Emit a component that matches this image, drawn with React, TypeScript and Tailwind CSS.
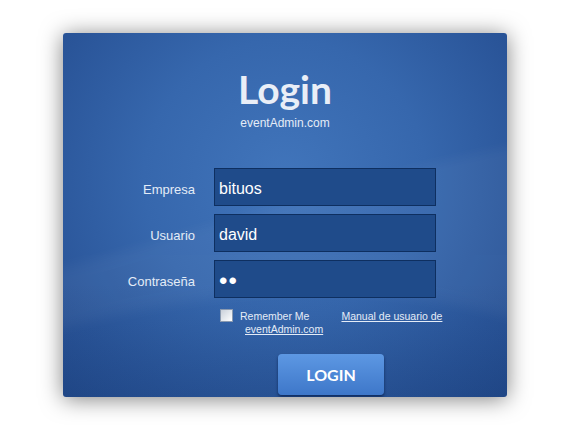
import React from "react";

const labelCls = "flex items-center justify-end pt-[6px] text-[13px] text-[#e4ecf7]";
const inputCls =
  "h-[38px] w-[222px] border border-[#0e2f60] bg-[#1f4b8a] px-[4px] pt-[3px] text-[16px] text-white outline-none";

const App = () => {
  return (
    <div className="h-[425px] w-[563px] bg-white pl-[63px] pt-[33px] font-['Liberation_Sans',Arial,sans-serif]">
      <div className="relative h-[364px] w-[444px] overflow-hidden rounded-[3px] bg-[radial-gradient(ellipse_at_50%_40%,#4175bb_0%,#3667ad_45%,#2a5599_80%,#244c8e_100%)] shadow-[0_2px_22px_rgba(0,0,0,0.5)]">
        {/* soft swoosh in the backdrop */}
        <svg className="absolute inset-0" width="444" height="364" viewBox="0 0 444 364">
          <defs>
            <linearGradient id="fade" x1="0" y1="0" x2="0" y2="1">
              <stop offset="0" stopColor="#0b2a5e" stopOpacity="0" />
              <stop offset="1" stopColor="#0b2a5e" stopOpacity="0.18" />
            </linearGradient>
            <filter id="soft" x="-10%" y="-10%" width="120%" height="120%">
              <feGaussianBlur stdDeviation="6" />
            </filter>
          </defs>
          <path d="M-20 240 C120 205 260 150 464 110 L464 290 C300 240 150 255 -20 300 Z" fill="#ffffff" opacity="0.04" filter="url(#soft)" />
          <rect x="0" y="250" width="444" height="114" fill="url(#fade)" />
        </svg>

        <div className="relative flex flex-col">
          <div className="pt-[34px] text-center">
            <h1 className="font-['Lato',sans-serif] text-[39px] font-bold leading-[44px] text-[#e9eef7]">Login</h1>
            <p className="mt-[3px] text-[12px] text-[#e4ecf7]">eventAdmin.com</p>
          </div>

          <form className="mt-[36px] grid grid-cols-[132px_222px] gap-x-[19px] gap-y-[8px]">
            <label className={labelCls}>Empresa</label>
            <input className={inputCls} defaultValue="bituos" />
            <label className={labelCls}>Usuario</label>
            <input className={inputCls} defaultValue="david" />
            <label className={labelCls}>Contraseña</label>
            <input className={inputCls + " tracking-[1px] text-[24px]"} type="password" defaultValue="ab" />

            <div className="col-start-2 mt-[1px] flex whitespace-nowrap text-[10.5px] leading-[13px] text-[#e4ecf7]">
              <span className="ml-[6px] mt-[2px] h-[13px] w-[13px] shrink-0 border border-[#8a9ab0] bg-[linear-gradient(135deg,#c9d0da,#ffffff)]" />
              <div className="ml-[7px] mt-[3px]">
                <div className="flex">
                  <span>Remember Me</span>
                  <a href="#" className="ml-[32px] underline">Manual de usuario de</a>
                </div>
                <a href="#" className="ml-[5px] underline">eventAdmin.com</a>
              </div>
            </div>

            <div className="col-start-2 mt-[10px]">
              <button
                type="button"
                className="ml-[64px] h-[41px] w-[106px] rounded-[4px] bg-[linear-gradient(#5d98e3,#3e77c9)] font-['Lato',sans-serif] text-[16px] font-bold text-white shadow-[0_2px_3px_rgba(0,20,60,0.6)]"
              >
                LOGIN
              </button>
            </div>
          </form>
        </div>
      </div>
    </div>
  );
};

export default App;
